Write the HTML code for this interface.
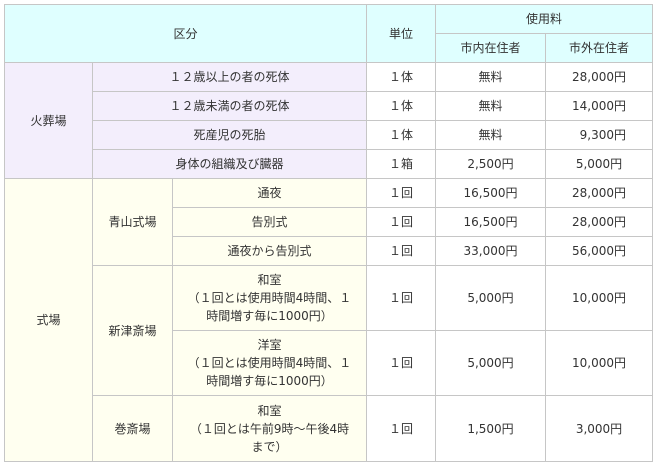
<!DOCTYPE html>
<html><head><meta charset="utf-8"><style>
html,body{margin:0;padding:0;background:#fff;width:657px;height:465px;overflow:hidden}
table{position:absolute;left:4px;top:4px;border-collapse:collapse;table-layout:fixed;font-family:"DejaVu Sans","Noto Sans CJK JP",sans-serif;font-size:12px;color:#333}
td,th{border:1px solid #c6c6c6;padding:0;text-align:center;font-weight:normal;line-height:18px;box-sizing:border-box}
th{background:#dfffff}
.p{background:#f3eefc}
.y{background:#fffff0}
.w{background:#fff}
</style></head><body>
<table>
<colgroup><col style="width:88px"><col style="width:80px"><col style="width:194px"><col style="width:69px"><col style="width:110px"><col style="width:107px"></colgroup>
<tr style="height:29px"><th colspan="3" rowspan="2">区分</th><th rowspan="2">単位</th><th colspan="2">使用料</th></tr>
<tr style="height:29px"><th>市内在住者</th><th>市外在住者</th></tr>
<tr style="height:29px"><td class="p" rowspan="4">火葬場</td><td class="p" colspan="2">１２歳以上の者の死体</td><td class="w">１体</td><td class="w">無料</td><td class="w">28,000円</td></tr>
<tr style="height:29px"><td class="p" colspan="2">１２歳未満の者の死体</td><td class="w">１体</td><td class="w">無料</td><td class="w">14,000円</td></tr>
<tr style="height:29px"><td class="p" colspan="2">死産児の死胎</td><td class="w">１体</td><td class="w">無料</td><td class="w">&nbsp;&nbsp;9,300円</td></tr>
<tr style="height:29px"><td class="p" colspan="2">身体の組織及び臓器</td><td class="w">１箱</td><td class="w">2,500円</td><td class="w">5,000円</td></tr>
<tr style="height:29px"><td class="y" rowspan="7">式場</td><td class="y" rowspan="3">青山式場</td><td class="y">通夜</td><td class="w">１回</td><td class="w">16,500円</td><td class="w">28,000円</td></tr>
<tr style="height:29px"><td class="y">告別式</td><td class="w">１回</td><td class="w">16,500円</td><td class="w">28,000円</td></tr>
<tr style="height:29px"><td class="y">通夜から告別式</td><td class="w">１回</td><td class="w">33,000円</td><td class="w">56,000円</td></tr>
<tr style="height:65px"><td class="y" rowspan="2">新津斎場</td><td class="y">和室<br>（１回とは使用時間4時間、１<br>時間増す毎に1000円）</td><td class="w">１回</td><td class="w">5,000円</td><td class="w">10,000円</td></tr>
<tr style="height:65px"><td class="y">洋室<br>（１回とは使用時間4時間、１<br>時間増す毎に1000円）</td><td class="w">１回</td><td class="w">5,000円</td><td class="w">10,000円</td></tr>
<tr style="height:66px"><td class="y">巻斎場</td><td class="y">和室<br>（１回とは午前9時～午後4時<br>まで）</td><td class="w">１回</td><td class="w">1,500円</td><td class="w">3,000円</td></tr>
</table>
</body></html>
